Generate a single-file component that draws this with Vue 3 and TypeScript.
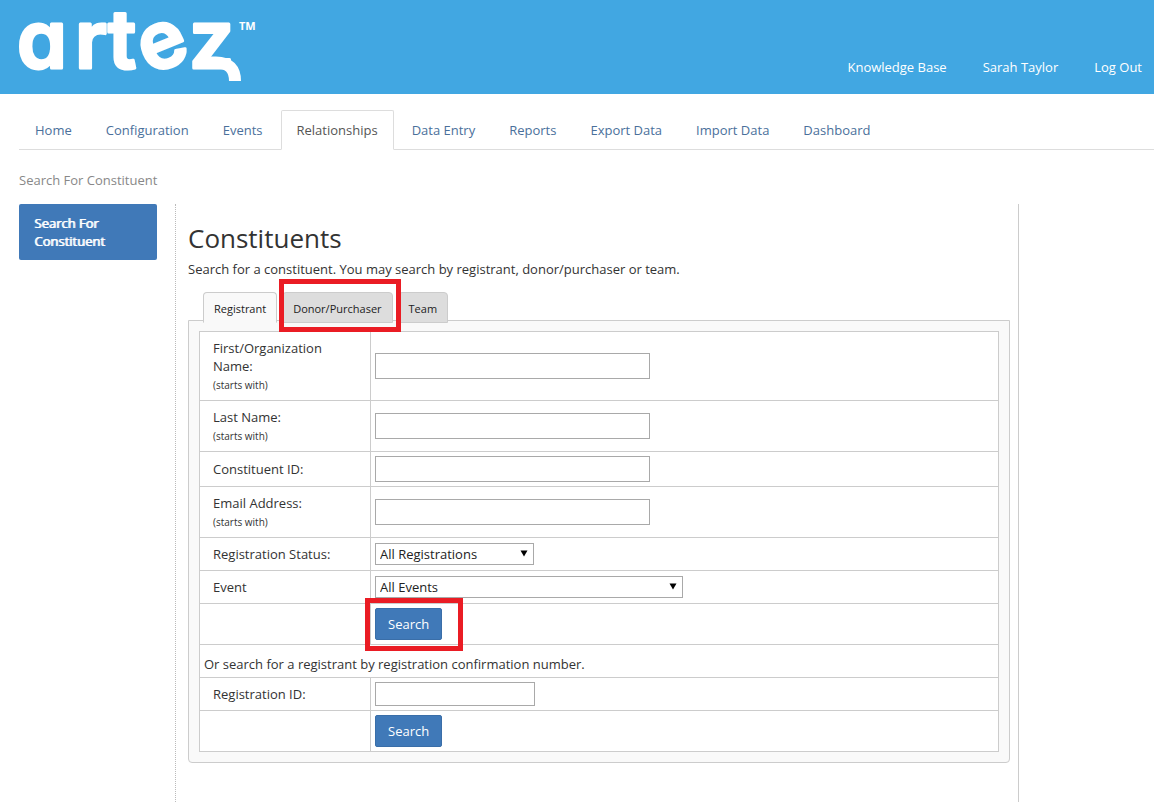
<script setup lang="ts">
import { ref } from 'vue'

interface Field {
  id: string
  label: string
  hint?: string
}

const navItems: string[] = [
  'Home', 'Configuration', 'Events', 'Relationships', 'Data Entry',
  'Reports', 'Export Data', 'Import Data', 'Dashboard',
]
const accountLinks: string[] = ['Knowledge Base', 'Sarah Taylor', 'Log Out']
const tabs: string[] = ['Registrant', 'Donor/Purchaser', 'Team']
const highlightedTab = 'Donor/Purchaser'
const fields: Field[] = [
  { id: 'first-name', label: 'First/Organization Name:', hint: '(starts with)' },
  { id: 'last-name', label: 'Last Name:', hint: '(starts with)' },
  { id: 'constituent-id', label: 'Constituent ID:' },
  { id: 'email', label: 'Email Address:', hint: '(starts with)' },
]
const activeNav = ref('Relationships')
const activeTab = ref('Registrant')
</script>

<template>
  <div class="page">
    <header class="banner">
      <svg class="logo" width="260" height="94" viewBox="0 0 260 94" role="img" aria-label="artez">
        <text class="wordmark" x="17 75 108 149 189" y="68 68 68 75 68" rotate="0 0 0 -22 0">artez</text>
        <path class="tail" d="M205 62.500H216C229 62.500 235 69 235 81" />
        <text class="mark" x="239" y="30">TM</text>
      </svg>
      <nav class="account">
        <a v-for="link in accountLinks" :key="link" href="#">{{ link }}</a>
      </nav>
    </header>

    <nav class="main-nav">
      <a
        v-for="item in navItems"
        :key="item"
        href="#"
        :class="{ active: item === activeNav }"
        @click.prevent="activeNav = item"
      >{{ item }}</a>
    </nav>

    <div class="breadcrumb">Search For Constituent</div>

    <div class="columns">
      <aside class="sidebar">
        <a href="#" class="side-link">Search For Constituent</a>
      </aside>

      <main class="content">
        <h1>Constituents</h1>
        <p class="intro">Search for a constituent. You may search by registrant, donor/purchaser or team.</p>

        <div class="tabs" role="tablist">
          <div v-for="tab in tabs" :key="tab" class="tab-slot">
            <button
              type="button"
              role="tab"
              class="tab"
              :class="{ active: tab === activeTab }"
              :aria-selected="tab === activeTab"
              @click="activeTab = tab"
            >{{ tab }}</button>
            <span v-if="tab === highlightedTab" class="callout callout-tab"></span>
          </div>
        </div>

        <form class="panel" @submit.prevent>
          <table>
            <colgroup>
              <col class="label-col">
              <col>
            </colgroup>
            <tbody>
              <tr v-for="field in fields" :key="field.id">
                <th scope="row">
                  <label :for="field.id">{{ field.label }}</label>
                  <small v-if="field.hint">{{ field.hint }}</small>
                </th>
                <td><input :id="field.id" type="text" class="wide"></td>
              </tr>
              <tr>
                <th scope="row"><label for="status">Registration Status:</label></th>
                <td>
                  <span class="select select-status">
                    <select id="status"><option>All Registrations</option></select>
                    <svg width="8" height="7" viewBox="0 0 8 7" aria-hidden="true"><path d="M.5.500H7.500L4 6.500Z" /></svg>
                  </span>
                </td>
              </tr>
              <tr>
                <th scope="row"><label for="event">Event</label></th>
                <td>
                  <span class="select select-event">
                    <select id="event"><option>All Events</option></select>
                    <svg width="8" height="7" viewBox="0 0 8 7" aria-hidden="true"><path d="M.5.500H7.500L4 6.500Z" /></svg>
                  </span>
                </td>
              </tr>
              <tr>
                <th></th>
                <td>
                  <span class="button-slot">
                    <button type="submit" class="primary">Search</button>
                    <span class="callout callout-search"></span>
                  </span>
                </td>
              </tr>
              <tr>
                <td colspan="2" class="note">Or search for a registrant by registration confirmation number.</td>
              </tr>
              <tr>
                <th scope="row"><label for="registration-id">Registration ID:</label></th>
                <td><input id="registration-id" type="text" class="short"></td>
              </tr>
              <tr>
                <th></th>
                <td>
                  <span class="button-slot">
                    <button type="submit" class="primary">Search</button>
                  </span>
                </td>
              </tr>
            </tbody>
          </table>
        </form>
      </main>
    </div>
  </div>
</template>

<style>
body {
  margin: 0;
  background: #fff;
}
</style>

<style scoped>
.page {
  display: flex;
  flex-direction: column;
  min-height: 100vh;
  font-family: "Open Sans", "Noto Sans", sans-serif;
  font-size: 13px;
  line-height: 18px;
  color: #333;
}
.page *,
.page {
  box-sizing: border-box;
}
a {
  text-decoration: none;
}
.banner {
  display: flex;
  justify-content: space-between;
  align-items: flex-end;
  height: 94px;
  background: #41a7e2;
}
.logo {
  display: block;
  overflow: visible;
}
.wordmark {
  font-family: Inter, sans-serif;
  font-size: 80px;
  font-weight: 600;
  font-feature-settings: "cv11";
  fill: #fff;
  stroke: #fff;
  stroke-width: 3;
  stroke-linejoin: round;
}
.tail {
  fill: none;
  stroke: #fff;
  stroke-width: 12;
  stroke-linejoin: round;
}
.mark {
  font-family: "Open Sans", sans-serif;
  font-size: 11px;
  font-weight: 700;
  fill: #fff;
}
.account {
  display: flex;
  gap: 36px;
  padding: 0 12px 18px 0;
}
.account a {
  color: #fff;
}
.main-nav {
  display: flex;
  gap: 2px;
  margin: 16px 0 0 19px;
  border-bottom: 1px solid #ddd;
}
.main-nav a {
  margin-bottom: -1px;
  padding: 10px 15px;
  border: 1px solid transparent;
  border-radius: 2px 2px 0 0;
  color: #4a709b;
}
.main-nav a.active {
  border-color: #ddd;
  border-bottom-color: #fff;
  background: #fff;
  color: #555;
}
.breadcrumb {
  margin: 21px 0 15px 19px;
  color: #888;
}
.columns {
  display: flex;
  flex: 1;
  gap: 18px;
  padding: 0 135px 0 19px;
}
.sidebar {
  flex: 0 0 138px;
}
.side-link {
  display: block;
  padding: 10px 15px;
  border-radius: 2px;
  background: #4079b8;
  color: #fff;
  text-shadow: 1px 0 #fff;
}
.content {
  flex: 1;
  min-width: 0;
  padding: 20px 8px 39px 12px;
  border-left: 1px dotted #bbb;
  border-right: 1px solid #ccc;
}
h1 {
  margin: 0 0 8px;
  font-size: 26px;
  font-weight: 400;
  line-height: 28px;
}
.intro {
  margin: 0 0 14px;
}
.tabs {
  display: flex;
  gap: 5px;
  position: relative;
  margin: 0 0 -3px 15px;
}
.tab-slot,
.button-slot {
  display: flex;
  position: relative;
  width: fit-content;
}
.tab {
  height: 31px;
  padding: 2px 10px 0;
  border: 1px solid #ccc;
  border-radius: 4px 4px 0 0;
  background: #ddd;
  color: #222;
  font: inherit;
  font-size: 11px;
}
.tab.active {
  border-bottom-color: #f9f9f9;
  background: #f9f9f9;
}
.callout {
  position: absolute;
  z-index: 1;
  border: 5px solid #ea1c24;
  pointer-events: none;
}
.callout-tab {
  inset: -13px -8px -9px -3px;
}
.callout-search {
  inset: -10px -21px -11px -10px;
}
.panel {
  padding: 10px;
  border: 1px solid #ccc;
  border-radius: 0 0 4px 4px;
  background: #f9f9f9;
}
table {
  width: 100%;
  border-collapse: collapse;
  table-layout: fixed;
  background: #fff;
}
.label-col {
  width: 171px;
}
th,
td {
  padding: 4px;
  border: 1px solid #ccc;
  text-align: left;
  font-weight: 400;
  vertical-align: middle;
}
th {
  padding: 7px 30px 7px 13px;
}
th label,
small {
  display: block;
}
small {
  padding-top: 2px;
  font-size: 10px;
  line-height: 16px;
}
.note {
  padding: 10px 4px 4px;
}
input {
  display: block;
  padding: 0 4px;
  border: 1px solid #a9a9a9;
  background: #fff;
  font: inherit;
}
.wide {
  width: 275px;
  height: 26px;
}
.short {
  width: 160px;
  height: 24px;
}
.select {
  display: block;
  position: relative;
}
.select select {
  display: block;
  appearance: none;
  width: 100%;
  height: 22px;
  padding: 0 20px 0 4px;
  border: 1px solid #a9a9a9;
  border-radius: 0;
  background: #fff;
  color: #222;
  font: inherit;
}
.select svg {
  position: absolute;
  top: 7px;
  right: 6px;
  pointer-events: none;
}
.select-status {
  width: 159px;
}
.select-event {
  width: 308px;
}
.primary {
  height: 32px;
  padding: 0 12px;
  border: 1px solid #3a6ea8;
  border-radius: 2px;
  background: #4079b8;
  color: #fff;
  font: inherit;
}
</style>
